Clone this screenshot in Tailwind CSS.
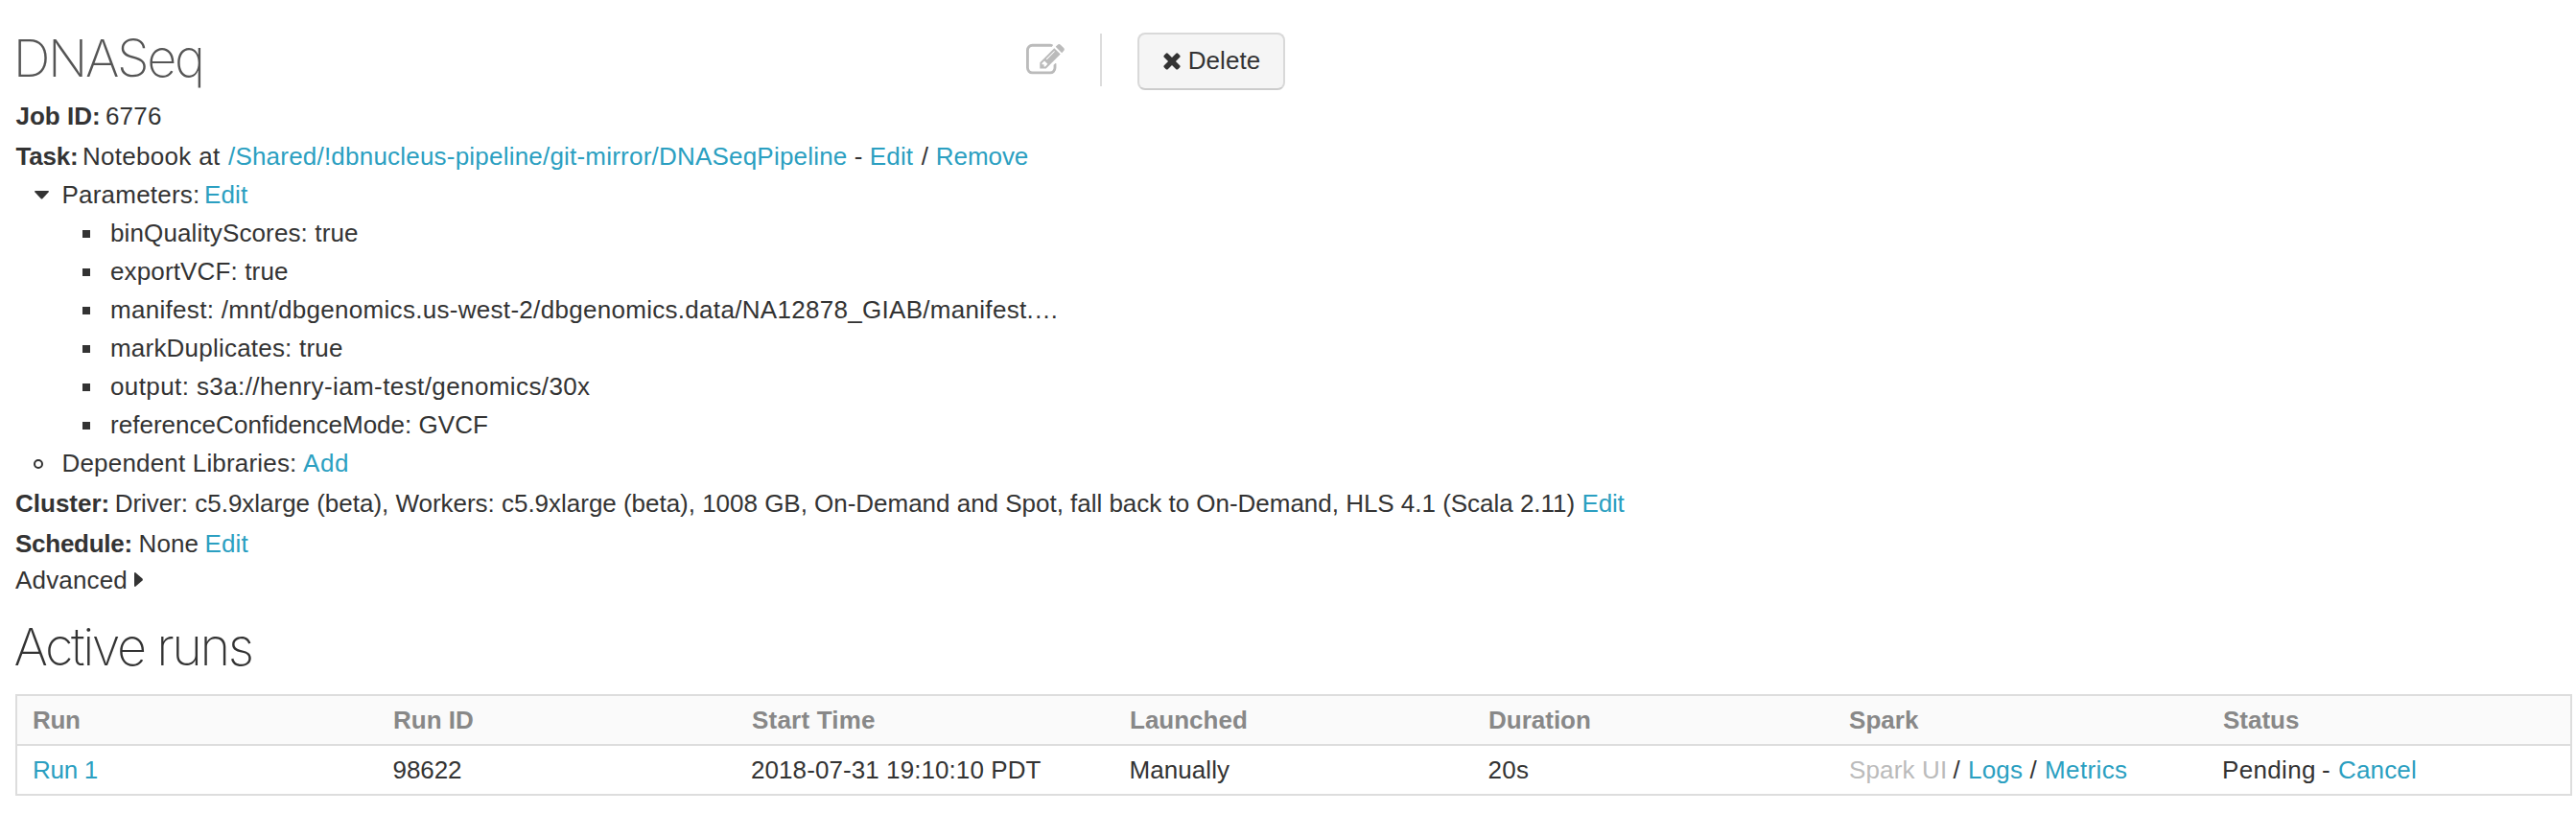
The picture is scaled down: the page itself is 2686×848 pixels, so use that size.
<!DOCTYPE html>
<html lang="en">
<head>
<meta charset="utf-8">
<title>DNASeq</title>
<script src="https://cdn.jsdelivr.net/npm/@tailwindcss/browser@4"></script>
</head>
<body class="bg-white">
<div class="w-[2686px] h-[848px] overflow-hidden pl-4 text-[#333333] text-[26px] leading-10 whitespace-nowrap font-['Liberation_Sans',Arial,sans-serif]">
  <header class="flex h-[101px]">
    <h1 class="w-[1054px] pt-[28px] leading-[66px] text-[54px] font-extralight text-[#555555] font-['Inter',sans-serif]"><span class="-ml-[2.3px] tracking-[-2.37px]">DNASeq</span></h1>
    <svg class="mt-[43px] size-10 fill-[#bbbbbb]" viewBox="0 0 1792 1792"><path d="M888 1184l116-116-152-152-116 116v56h96v96h56zm440-720q-16-16-33 1l-350 350q-17 17-1 33t33-1l350-350q17-17 1-33zm80 594v190q0 119-84.5 203.5t-203.5 84.5h-832q-119 0-203.5-84.5t-84.5-203.5v-832q0-119 84.5-203.5t203.5-84.5h832q63 0 117 25 15 7 18 23 3 17-9 29l-49 49q-14 14-32 8-23-6-45-6h-832q-66 0-113 47t-47 113v832q0 66 47 113t113 47h832q66 0 113-47t47-113v-126q0-13 9-22l64-64q15-15 35-7t20 29zm-96-738l288 288-672 672h-288v-288zm444 132l-92 92-288-288 92-92q28-28 68-28t68 28l152 152q28 28 28 68t-28 68z"/></svg>
    <div class="ml-[37px] mt-[35px] h-[55px] w-0.5 bg-[#dddddd]"></div>
    <button class="ml-[37px] mt-[34px] flex h-[60px] w-[154px] rounded-lg border-2 border-[#d9d9d9] border-b-[#cccccc] bg-[#f5f5f5] pl-[21px]">
      <svg class="mt-[14px] size-[26px] fill-[#333333]" viewBox="0 0 1792 1792"><path d="M1490 1322q0 40-28 68l-136 136q-28 28-68 28t-68-28l-294-294-294 294q-28 28-68 28t-68-28l-136-136q-28-28-28-68t28-68l294-294-294-294q-28-28-28-68t28-68l136-136q28-28 68-28t68 28l294 294 294-294q28-28 68-28t68 28l136 136q28 28 28 68t-28 68l-294 294 294 294q28 28 28 68z"/></svg>
      <span class="ml-[3.700px] mt-[7px] tracking-[0.06px]">Delete</span>
    </button>
  </header>
  <div class="flex h-[42px] pl-[0.5px]"><b>Job ID:</b><span class="ml-[5.3px] tracking-[0.21px]">6776</span></div>
  <div class="flex h-10 pl-[0.5px]"><b class="tracking-[-0.21px]">Task:</b><span class="ml-[4.5px] tracking-[0.3px]">Notebook at</span><a class="ml-[8.5px] tracking-[0.21px] text-[#2b9fc1]">/Shared/!dbnucleus-pipeline/git-mirror/DNASeqPipeline</a><span class="ml-[7.3px]">-</span><a class="ml-[7.3px] tracking-[0.14px] text-[#2b9fc1]">Edit</a><span class="ml-[8.6px]">/</span><a class="ml-[7.8px] tracking-[-0.07px] text-[#2b9fc1]">Remove</a></div>
  <ul>
    <li class="flex"><svg class="ml-[20px] mr-[13.5px] mt-[16px] h-[9px] w-[15px] fill-[#333333]" viewBox="0 0 15 9"><path d="M0 1q0-1 1-1h13q1 0 1 1L8.500 8q-1 1-2 0z"/></svg><span class="tracking-[0.21px]">Parameters:</span><a class="ml-[4.6px] tracking-[0.14px] text-[#2b9fc1]">Edit</a></li>
    <li class="flex"><i class="ml-[70px] mr-[21px] mt-[17px] size-2 bg-[#333333]"></i><span class="tracking-[0.13px]">binQualityScores: true</span></li>
    <li class="flex"><i class="ml-[70px] mr-[21px] mt-[17px] size-2 bg-[#333333]"></i><span class="tracking-[0.14px]">exportVCF: true</span></li>
    <li class="flex"><i class="ml-[70px] mr-[21px] mt-[17px] size-2 bg-[#333333]"></i><span class="tracking-[0.3px]">manifest: /mnt/dbgenomics.us-west-2/dbgenomics.data/NA12878_GIAB/manifest.…</span></li>
    <li class="flex"><i class="ml-[70px] mr-[21px] mt-[17px] size-2 bg-[#333333]"></i><span class="tracking-[0.21px]">markDuplicates: true</span></li>
    <li class="flex"><i class="ml-[70px] mr-[21px] mt-[17px] size-2 bg-[#333333]"></i><span class="tracking-[0.4px]">output: s3a://henry-iam-test/genomics/30x</span></li>
    <li class="flex"><i class="ml-[70px] mr-[21px] mt-[17px] size-2 bg-[#333333]"></i><span class="tracking-[0.03px]">referenceConfidenceMode: GVCF</span></li>
    <li class="flex h-[42px]"><i class="ml-[19px] mr-[19.5px] mt-[16px] size-[10px] rounded-full border-2 border-[#333333]"></i><span class="tracking-[0.18px]">Dependent Libraries:</span><a class="ml-[6.6px] tracking-[0.6px] text-[#2b9fc1]">Add</a></li>
  </ul>
  <div class="flex h-[42px]"><b>Cluster:</b><span class="ml-[5.4px] tracking-[-0.02px]">Driver: c5.9xlarge (beta), Workers: c5.9xlarge (beta), 1008 GB, On-Demand and Spot, fall back to On-Demand, HLS 4.1 (Scala 2.11)</span><a class="ml-[7.4px] tracking-[-0.19px] text-[#2b9fc1]">Edit</a></div>
  <div class="flex h-[38px]"><b class="tracking-[-0.26px]">Schedule:</b><span class="ml-[6.6px] tracking-[0.1px]">None</span><a class="ml-[6.4px] tracking-[0.14px] text-[#2b9fc1]">Edit</a></div>
  <div class="flex h-10"><span class="tracking-[0.17px]">Advanced</span><svg class="ml-[7px] mt-[12px] h-[15px] w-[9px] fill-[#333333]" viewBox="0 0 9 15"><path d="M0 1q0-1 1-1L8.500 6.500q.7 1 0 2L1 15q-1 0-1-1z"/></svg></div>
  <h2 class="h-[99px] pt-[17px] leading-[66px] text-[54px] font-extralight font-['Inter',sans-serif]"><span class="-ml-[1.4px] tracking-[-2.47px]">Active runs</span></h2>
  <div class="w-[2666px] border-2 border-[#dddddd]">
    <div class="grid h-[52px] grid-cols-[376px_374px_394px_374px_376px_390px_1fr] border-b-2 border-[#dddddd] bg-[#fafafa] pl-4 leading-[50px] font-bold text-[#888888]">
      <span class="tracking-[-0.33px]">Run</span><span>Run ID</span><span class="tracking-[0.2px]">Start Time</span><span>Launched</span><span>Duration</span><span class="tracking-[0.05px]">Spark</span><span>Status</span>
    </div>
    <div class="grid h-[50px] grid-cols-[375.5px_373.5px_394.5px_374px_376.5px_389px_1fr] pl-4 leading-[50px]">
      <a class="tracking-[-0.3px] text-[#2b9fc1]">Run 1</a><span class="tracking-[-0.08px]">98622</span><span class="tracking-[0.08px]">2018-07-31 19:10:10 PDT</span><span class="tracking-[0.06px]">Manually</span><span class="tracking-[0.29px]">20s</span>
      <div class="flex"><span class="tracking-[0.15px] text-[#bbbbbb]">Spark UI</span><span class="ml-[6.1px]">/</span><a class="ml-[8.3px] tracking-[0.21px] text-[#2b9fc1]">Logs</a><span class="ml-[7.3px]">/</span><a class="ml-[8.3px] tracking-[0.37px] text-[#2b9fc1]">Metrics</a></div>
      <div class="flex"><span class="tracking-[0.34px]">Pending</span><span class="ml-[6.2px]">-</span><a class="ml-[8.3px] tracking-[0.17px] text-[#2b9fc1]">Cancel</a></div>
    </div>
  </div>
</div>
</body>
</html>
